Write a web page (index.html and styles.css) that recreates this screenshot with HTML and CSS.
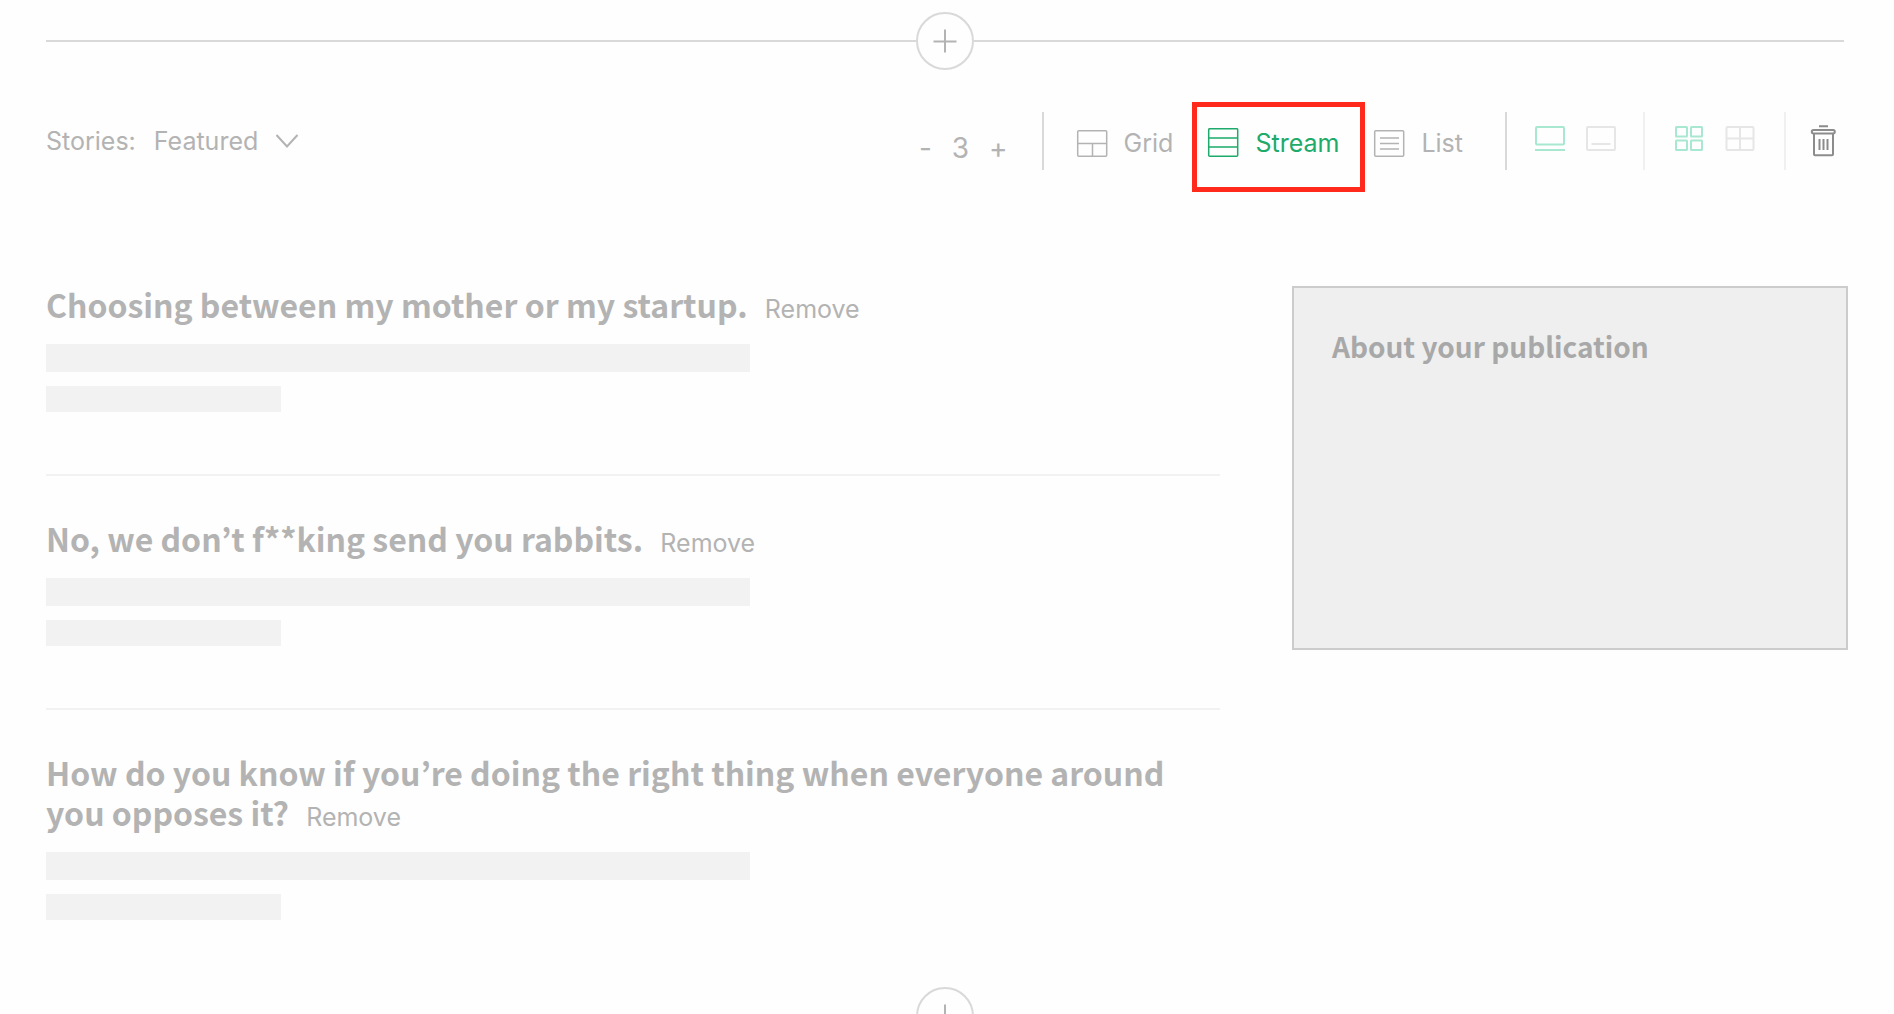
FILE: index.html
```html
<!DOCTYPE html>
<html lang="en">
<head>
    <meta charset="UTF-8">
    <meta name="viewport" content="width=device-width, initial-scale=1.0">
    <title>Edit homepage layout</title>
    <link rel="stylesheet" href="styles.css">
</head>
<body>
    <div class="add-section">
        <button type="button" class="add-button" aria-label="Add section">
            <svg width="24" height="24" viewBox="0 0 24 24"><path d="M12 0.5v23M0.5 12.5h23"/></svg>
        </button>
    </div>

    <main class="section">
        <div class="toolbar">
            <div class="source">
                <label for="source">Stories:</label>
                <select id="source" name="source">
                    <option>Featured</option>
                </select>
                <svg class="chevron" width="24" height="16" viewBox="0 0 24 16"><path d="M1.500 2L12 13.500 22.500 2"/></svg>
            </div>

            <div class="stepper">
                <button type="button" aria-label="Fewer stories">-</button>
                <output>3</output>
                <button type="button" aria-label="More stories">+</button>
            </div>

            <div class="views">
                <button type="button" class="view">
                    <svg width="32" height="30" viewBox="0 0 32 30"><rect x="1.700" y="2.700" width="29" height="25.600" rx="1"/><path d="M1.700 15.500h29M16.500 15.500v12.800"/></svg>
                    Grid
                </button>
                <button type="button" class="view active">
                    <svg width="32" height="30" viewBox="0 0 32 30"><rect x="1.700" y="0.700" width="29" height="27.600" rx="1"/><path d="M1.700 10h29M1.700 19h29"/></svg>
                    Stream
                </button>
                <button type="button" class="view">
                    <svg width="32" height="30" viewBox="0 0 32 30"><rect x="1.700" y="2.700" width="29" height="25.600" rx="1"/><path d="M7 10h19M7 15.500h19M7 21h19"/></svg>
                    List
                </button>
            </div>

            <div class="options">
                <button type="button" class="option on" aria-label="Text below image">
                    <svg width="32" height="26" viewBox="0 0 32 26"><rect x="2" y="2" width="28" height="17.500" rx="1"/><path d="M1 25h30"/></svg>
                </button>
                <button type="button" class="option" aria-label="Text over image">
                    <svg width="32" height="26" viewBox="0 0 32 26"><rect x="2" y="2" width="28" height="23" rx="1"/><path d="M6.500 19h19"/></svg>
                </button>
            </div>

            <div class="options">
                <button type="button" class="option on" aria-label="Spaced tiles">
                    <svg width="32" height="26" viewBox="0 0 32 26"><rect x="3" y="2" width="11" height="9.500" rx="0.500"/><rect x="18" y="2" width="11" height="9.500" rx="0.500"/><rect x="3" y="15.500" width="11" height="9.500" rx="0.500"/><rect x="18" y="15.500" width="11" height="9.500" rx="0.500"/></svg>
                </button>
                <button type="button" class="option" aria-label="Joined tiles">
                    <svg width="32" height="26" viewBox="0 0 32 26"><rect x="2.500" y="2" width="27" height="23" rx="1"/><path d="M16 2v23M2.500 13.500h27"/></svg>
                </button>
            </div>

            <div class="options">
                <button type="button" class="delete" aria-label="Delete section">
                    <svg width="26" height="32" viewBox="0 0 26 32"><path d="M9 1.200h9M9.500 14v11M13.500 14v11M17.500 14v11"/><rect x="1.800" y="5" width="23" height="3.500" rx="1.700"/><path d="M4 9v20.300q0 1 1 1h17q1 0 1-1V9"/></svg>
                </button>
            </div>
        </div>

        <div class="content">
            <div class="stories">
                <article class="story">
                    <h2>Choosing between my mother or my startup. <button type="button" class="remove">Remove</button></h2>
                    <div class="line"></div>
                    <div class="line short"></div>
                </article>
                <article class="story">
                    <h2>No, we don’t f**king send you rabbits. <button type="button" class="remove">Remove</button></h2>
                    <div class="line"></div>
                    <div class="line short"></div>
                </article>
                <article class="story">
                    <h2>How do you know if you’re doing the right thing when everyone around you opposes it? <button type="button" class="remove">Remove</button></h2>
                    <div class="line"></div>
                    <div class="line short"></div>
                </article>
            </div>

            <aside class="about">
                <h3>About your publication</h3>
            </aside>
        </div>
    </main>

    <div class="add-section">
        <button type="button" class="add-button" aria-label="Add section">
            <svg width="24" height="24" viewBox="0 0 24 24"><path d="M12 0.5v23M0.5 12.5h23"/></svg>
        </button>
    </div>
</body>
</html>
```

FILE: styles.css
```css
* {
    box-sizing: border-box;
}

body {
    margin: 0;
    padding: 12px 46px 0;
    background-color: #fefefe;
    color: #b3b3b3;
    font-family: 'Inter', sans-serif;
    font-size: 25px;
}

button,
select {
    margin: 0;
    padding: 0;
    border: none;
    background: none;
    color: inherit;
    font: inherit;
    cursor: pointer;
}

svg {
    display: block;
    flex: none;
    fill: none;
    stroke: currentColor;
    stroke-width: 2;
}

/* divider with the plus button */
.add-section {
    display: flex;
    align-items: center;
    margin-right: 4px;
}

.add-section::before,
.add-section::after {
    content: '';
    flex: 1;
    height: 2px;
    background-color: #d9d9d9;
}

.add-button {
    display: flex;
    align-items: center;
    justify-content: center;
    width: 58px;
    height: 58px;
    border: 2px solid #d9d9d9;
    border-radius: 50%;
}

/* toolbar */
.toolbar {
    display: flex;
    height: 58px;
    margin-top: 42px;
    padding-right: 12px;
}

.source {
    display: flex;
    align-items: center;
    margin-right: auto;
}

.source select {
    appearance: none;
    margin: 0 16px 0 18px;
}

.stepper {
    display: flex;
    align-items: center;
    gap: 20px;
    padding: 14px 34px 0 0;
    font-size: 28px;
}

.views {
    display: flex;
    align-items: center;
    gap: 34px;
    padding: 4px 42px 0 32px;
    border: solid #d9d9d9;
    border-width: 0 2px;
}

.view {
    position: relative;
    display: flex;
    align-items: center;
    gap: 16px;
}

.view svg {
    stroke-width: 1.5;
}

.view.active {
    color: #1daa6a;
}

.view.active::after {
    content: '';
    position: absolute;
    inset: -26px -26px -34px -15px;
    border: 5px solid #ff2a1c;
}

.options {
    display: flex;
    align-items: center;
    gap: 19px;
    padding: 0 26px 6px 27px;
}

.options + .options {
    padding: 0 28px 6px;
    border-left: 2px solid #f0f0f0;
}

.options:last-child {
    padding: 0 0 0 24px;
}

.option {
    color: #e6e6e6;
}

.option.on {
    color: #a8e8d0;
}

.delete {
    color: #8c8c8c;
}

/* story list */
.content {
    display: grid;
    grid-template-columns: 1174fr 556fr;
    gap: 72px;
    align-items: start;
    margin-top: 114px;
}

.story {
    padding: 42px 0 62px;
    border-bottom: 2px solid #f2f2f2;
}

.story:first-child {
    padding-top: 0;
}

.story:last-child {
    padding-bottom: 67px;
    border-bottom: none;
}

h2,
h3 {
    margin: 0;
    font-family: 'Noto Sans CJK KR', sans-serif;
    font-weight: bold;
}

h2 {
    margin-bottom: 20px;
    font-size: 32px;
    line-height: 40px;
}

.remove {
    margin-left: 10px;
    font-family: 'Inter', sans-serif;
    font-size: 25px;
    font-weight: normal;
    line-height: 24px;
}

.line {
    width: 60%;
    height: 28px;
    background-color: #f2f2f2;
}

.line.short {
    width: 20%;
    height: 26px;
    margin-top: 14px;
}

.about {
    min-height: 364px;
    margin-top: 2px;
    padding: 38px;
    border: 2px solid #ccc;
    background-color: #efefef;
}

h3 {
    color: #a8a8a8;
    font-size: 28px;
    line-height: 40px;
}
```
